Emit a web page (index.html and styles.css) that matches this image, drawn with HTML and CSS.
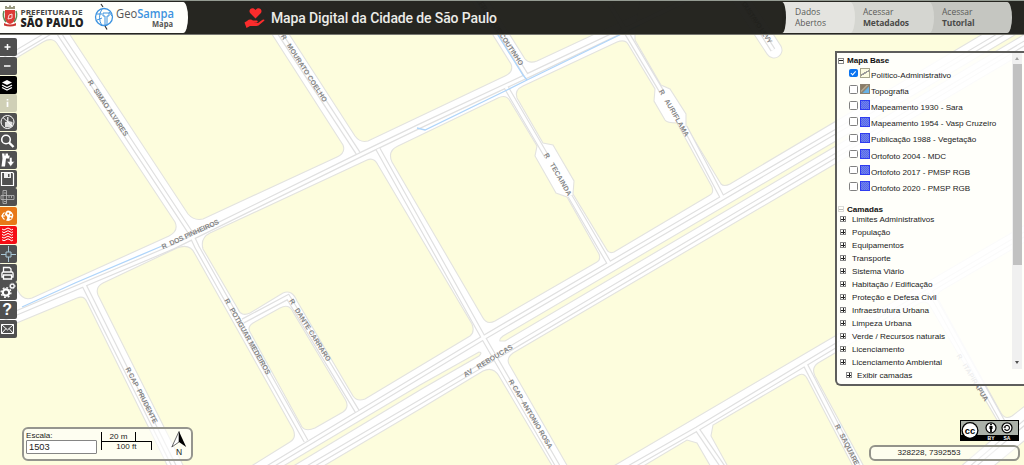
FILE: index.html
```html
<!DOCTYPE html>
<html lang="pt-BR">
<head>
<meta charset="UTF-8">
<meta name="viewport" content="width=device-width, initial-scale=1.0">
<title>GeoSampa Mapa</title>
<link rel="stylesheet" href="styles.css">
</head>
<body>
<svg class="map" width="1024" height="465" viewBox="0 0 1024 465">
    <rect width="1024" height="465" fill="#fff"/>
    <!-- quadras -->
    <g class="blocks">
        <path d="M-5 71L43 42Q53 36 58 45L175 222Q179 231 169 236L32 298Q23 301 18 291L-5 255Z"/>
        <path d="M47 0L188 214Q194 221 203 219L337 157Q346 153 343 145L250 0Z"/>
        <path d="M267 0L355 136Q360 143 368 141L505 76Q514 72 511 64L471 0Z"/>
        <path d="M488 0L525 59Q529 64 537 61L640 13V0Z"/>
        <path d="M203 249Q200 238 210 233L367 160Q374 157 378 165L472 324Q475 332 470 336L365 399Q357 402 353 396L297 301Q292 289 283 293L250 313Q241 317 238 309Z"/>
        <path d="M250 332Q247 327 253 323L280 308Q289 303 293 312L345 399Q350 407 343 412L315 428Q306 432 302 427Z"/>
        <path d="M98 295Q95 287 103 283L177 248Q190 243 195 254L293 429Q297 438 290 442L240 473H187Z"/>
        <path d="M-5 332L77 298Q84 295 87 302L171 473H-5Z"/>
        <path d="M392 162Q387 151 398 146L498 98Q506 94 510 101L537 146L535 156L556 193L567 197L599 254Q601 260 597 262L495 321Q487 325 483 318Z"/>
        <path d="M517 98Q514 90 523 86L617 42Q625 39 628 44L655 89L654 101L665 120Q667 123 677 123L712 187Q714 193 710 195L614 252Q609 254 607 250L573 194L574 181L553 145L543 143Z"/>
        <path d="M640 0L635 30V40L661 85L670 89L686 114V126L721 184Q724 187 730 184L1030 6V0Z"/>
        <path d="M500 341Q499 339 503 336L835 141.5L1030 26V31L835 146.500L505 341Z"/>
        <path d="M479 352Q483 352 479 356L420 390L290 468H280L420 385Z"/>
        <path d="M310 474L420 409L483 371Q493 366 499 376L557 474Z"/>
        <path d="M509 364Q506 358 513 353L835 164L1030 49V222L835 336L600 474H572Z"/>
        <path d="M630 474L687 440L697 443L715 474Z"/>
        <path d="M732 474L711 436L713 425L797 376Q804 371 808 380L857 474Z"/>
        <path d="M815 376Q811 368 818 363L920 303Q926 300 930 306L1000 425Q1001 432 994 438L952 474H868Z"/>
        <path d="M938 299Q936 293 944 289L1030 239V402L1012 416Q1005 420 1001 413Z"/>
        <path d="M984 474L1030 436V474Z"/>
    </g>
    <path d="M728 -20L774 50" stroke="#e3e3df" stroke-width="17" stroke-linecap="round"/>
    <path d="M728 -20L774 50" stroke="#fff" stroke-width="15" stroke-linecap="round"/>

    <!-- eixos das vias -->
    <defs>
        <g id="lanes" fill="none">
            <path d="M-5 65L59 27"/>
            <path d="M37 0L190 232L197 247L306 441"/>
            <path d="M-5 322L173 247L360 155L420 126L527 76L700 -6"/>
            <path d="M258 0L358 153"/>
            <path d="M378 149L483 337L560 470"/>
            <path d="M480 0L526 75"/>
            <path d="M506 87L547 157M570 196L609 263"/>
            <path d="M610 5L662 92M685 127L722 197"/>
            <path d="M264 470L420 376L483 338L835 132L1030 17"/>
            <path d="M304 470L420 402L835 156L1030 40"/>
            <path d="M243 321L288 297L357 411"/>
            <path d="M84 285L176 470"/>
            <path d="M625 470L697 429L835 346L1030 231"/>
            <path d="M697 429L725 470"/>
            <path d="M805 364L860 470"/>
            <path d="M930 291L1003 422"/>
            <path d="M735 -10L773 50"/>
            <path d="M964 474L1030 418"/>
        </g>
    </defs>
    <use href="#lanes" stroke="#e0e0e0" stroke-width="5.4"/>
    <use href="#lanes" stroke="#fff" stroke-width="3"/>
    <g class="water">
        <path d="M22 307L75 283L162 246"/>
        <path d="M417 128L425 130L505 91L527 80L640 25"/>
        <path d="M476 0L523 75L527 80"/>
    </g>

    <g class="streets">
        <text transform="translate(89.500 80.500) rotate(55.8)" textLength="66">R   SIMAO ALVARES</text>
        <text transform="translate(282.500 35) rotate(56.9)" textLength="79">R   MOURATO COELHO</text>
        <text transform="translate(162 247) rotate(-24.5)" textLength="62">R  DOS PINHEIROS</text>
        <text transform="translate(226.500 299) rotate(60.5)" textLength="86">R   POTIGUAR MEDEIROS</text>
        <text transform="translate(291 299.500) rotate(58)" textLength="72">R   DANTE CARRARO</text>
        <text transform="translate(127.500 367.500) rotate(62.8)" textLength="62">R CAP  PRUDENTE</text>
        <text transform="translate(480.500 2) rotate(56.6)" textLength="75">FRADIQUE COUTINHO</text>
        <text transform="translate(743.500 2) rotate(56.3)" textLength="49">GUSTAVO LEVY</text>
        <text transform="translate(546 153.500) rotate(60)" textLength="48">R   TECAINDA</text>
        <text transform="translate(661 90) rotate(60)" textLength="53">R   AURIFLAMA</text>
        <text transform="translate(464 375) rotate(-31)" textLength="56">AV   REBOUCAS</text>
        <text transform="translate(510.500 380) rotate(59.2)" textLength="79">R CAP  ANTONIO ROSA</text>
        <text transform="translate(837 424.500) rotate(63)" textLength="45">R   SAQUARE</text>
        <text transform="translate(958.500 354.500) rotate(58.5)" textLength="54">R   ITAPIRAPUA</text>
    </g>
</svg>

<header class="header">
    <div class="logos">
        <svg width="188" height="31" viewBox="0 2 188 31">
            <!-- brasao -->
            <path d="M5 9V6h2v1h2V5.500h2V7h2V6h2v3z" fill="#9a9a80"/>
            <path d="M5 10h10v9q-1 4-5 5q-4-1-5-5z" fill="#dc3b35"/>
            <path d="M4 11q-2 6 2 11M16 11q2 6-2 11" stroke="#5c8a55" stroke-width="1.500" fill="none"/>
            <path d="M8 19l1-4l3-1v4z" fill="none" stroke="#fff" stroke-width=".8"/>
            <path d="M4 23q6 3 12 0v2.500q-6 2-12 0z" fill="#c93630"/>
            <text class="pref" x="20.500" y="15" textLength="62" lengthAdjust="spacingAndGlyphs">PREFEITURA DE</text>
            <text class="sp" x="20.500" y="27" textLength="63" lengthAdjust="spacingAndGlyphs">SÃO PAULO</text>
            <!-- globo -->
            <g fill="none" stroke="#3d93e0">
                <circle cx="104" cy="17" r="8.500" stroke-width="1.300"/>
                <path d="M102 9q-5 8 0 17M96 14h6M97 20l5-2M105 25v-9h-2v-3h6v3h-2v9M109 12l3 4"/>
            </g>
            <path d="M101 4l2 3M105 26l2 3.500" stroke="#333" stroke-width="1.200"/>
            <text class="geo" x="116" y="18" textLength="58" lengthAdjust="spacingAndGlyphs">Geo<tspan>Sampa</tspan></text>
            <text class="mapa" x="152" y="26.500" textLength="21" lengthAdjust="spacingAndGlyphs">Mapa</text>
        </svg>
    </div>
    <div class="title">
        <svg width="22" height="22" viewBox="0 0 22 22" fill="#fb2c2c">
            <path d="M11.500 11.500L6.300 6.300C3.500 3 8.500-1 11.500 3C14.500-1 19.500 3 16.700 6.300z"/>
            <path d="M.5 15.500L3 14q3-2.500 6-.5h4q1.500.8 0 2l-3 .3l4 .2l4.500-3.200q2-.6 2 .8l-6 5q-1 .6-3 .4H6L2.500 21z"/>
        </svg>
        <h1>Mapa Digital da Cidade de São Paulo</h1>
    </div>
    <nav class="tabs">
        <a class="tab dados">Dados<br>Abertos</a>
        <a class="tab meta">Acessar<br><b>Metadados</b></a>
        <a class="tab tutorial">Acessar<br><b>Tutorlal</b></a>
    </nav>
</header>

<div class="toolbar">
    <button><svg viewBox="0 0 16 18"><path d="M7.500 6v6M4.500 9h6" stroke-width="1.500"/></svg></button>
    <button><svg viewBox="0 0 16 18"><path d="M4 9h6.500" stroke-width="1.500"/></svg></button>
    <button class="black"><svg viewBox="0 0 16 18"><path d="M7 4l5 2.500L7 9L2 6.500z" fill="#fff" stroke="none"/><path d="M2 9l5 2.500L12 9M2 11.500L7 14l5-2.500" stroke-width="1.200"/></svg></button>
    <button class="light"><svg viewBox="0 0 16 18"><path d="M7.500 5v1.500M7.500 7.800V13" stroke-width="1.700"/></svg></button>
    <button><svg viewBox="0 0 16 18"><circle cx="7.500" cy="9" r="6.500"/><path d="M5 14V9h2V4h1.500v4l4 1v4l-2 1.500z" fill="#ddd" stroke="none"/><path d="M3 4.500l9.500 9"/></svg></button>
    <button><svg viewBox="0 0 16 18"><circle cx="6" cy="7.500" r="4.300" stroke-width="1.600"/><path d="M9 10.500l4.500 4.500" stroke-width="2.400"/></svg></button>
    <button><svg viewBox="0 0 16 18"><path d="M2 2.500h2.500v2h1v-2H8v2h1.500v3H6l-1 8H1.500l1-8z" fill="#fff" stroke="none"/><path d="M9.500 6.500h2.500v4h2.500L10.700 15.500L7 10.500h2.500z" fill="#fff" stroke="#505050" stroke-width=".5"/></svg></button>
    <button><svg viewBox="0 0 16 18"><path d="M1.500 2.500h11l1 1v12h-12z" stroke-width="1.200"/><path d="M4 3h7v5H4z" fill="#eee" stroke="none"/><path d="M8 4h1.500v3H8z" fill="#505050" stroke="none"/></svg></button>
    <button><svg viewBox="0 0 16 18"><path d="M3 2.500h3.500v13H3zM1 7.500h13v4H1zM4 5h2M4 13.500h2M9 8v2M11.500 8v2" stroke="#bbb" stroke-width=".8"/></svg></button>
    <button class="orange"><svg viewBox="0 0 16 18"><path d="M8 3.500a5.200 5.200 0 1 1-2 10q3-3.500-1-5.500q0-4 3-4.500z" fill="#fff" stroke="none"/><g fill="#e87817" stroke="none"><circle cx="8.200" cy="6.500" r="1"/><circle cx="11" cy="8" r="1"/><circle cx="10.500" cy="11.300" r="1"/></g><path d="M4.500 5.500Q0 9 4.500 12.500M1 9h4" stroke-width="1.200"/></svg></button>
    <button class="red"><svg viewBox="0 0 16 18"><path d="M2 3q2 2 4 0t4 0t3 0M2 5.700q2 2 4 0t4 0t3 0M2 8.400q2 2 4 0t4 0t3 0M2 11.100q2 2 4 0t4 0t3 0M2 13.800q2 2 4 0t4 0t3 0"/></svg></button>
    <button><svg viewBox="0 0 16 18"><path d="M6 7h5v5H6zM8.500 1v6M8.500 12v5M1 9.500h5M11 9.500h5" stroke="#a9c8d6"/></svg></button>
    <button><svg viewBox="0 0 16 18"><path d="M3.500 8V3.500h6l1.500 1.500v3M3.500 13H2q-.5-5 1-5h9q1.500 0 1 5h-2M3.500 11h8v4h-8z" stroke-width="1.300"/></svg></button>
    <button><svg viewBox="0 0 16 18"><circle cx="6" cy="10.500" r="3.200" stroke-width="2.200"/><circle cx="6" cy="10.500" r="4.900" stroke-width="1.400" stroke-dasharray="1.900 1.900"/><circle cx="12.300" cy="4" r="1.900" stroke-width="1.300"/><circle cx="12.300" cy="4" r="2.800" stroke-width=".8" stroke-dasharray="1 1"/></svg></button>
    <button class="help">?</button>
    <button><svg viewBox="0 0 16 18"><path d="M1.500 4.500h12v9h-12zM1.500 4.500l6 5.500l6-5.500M1.500 13.500l4.500-5M13.500 13.500L9 8.500"/></svg></button>
</div>

<aside class="panel">
    <div class="scroll">
        <div class="tree">
            <div class="group"><i class="box minus"></i>Mapa Base</div>
            <ul class="base">
                <li><input type="checkbox" checked><i class="pic politico"></i><span>Político-Administrativo</span></li>
                <li><input type="checkbox"><i class="pic topo"></i><span>Topografia</span></li>
                <li><input type="checkbox"><i class="pic"></i><span>Mapeamento 1930 - Sara</span></li>
                <li><input type="checkbox"><i class="pic"></i><span>Mapeamento 1954 - Vasp Cruzeiro</span></li>
                <li><input type="checkbox"><i class="pic"></i><span>Publicação 1988 - Vegetação</span></li>
                <li><input type="checkbox"><i class="pic"></i><span>Ortofoto 2004 - MDC</span></li>
                <li><input type="checkbox"><i class="pic"></i><span>Ortofoto 2017 - PMSP RGB</span></li>
                <li><input type="checkbox"><i class="pic"></i><span>Ortofoto 2020 - PMSP RGB</span></li>
            </ul>
            <div class="group"><i class="box minus faint"></i>Camadas</div>
            <ul class="layers">
                <li><i class="box plus"></i>Limites Administrativos</li>
                <li><i class="box plus"></i>População</li>
                <li><i class="box plus"></i>Equipamentos</li>
                <li><i class="box plus"></i>Transporte</li>
                <li><i class="box plus"></i>Sistema Viário</li>
                <li><i class="box plus"></i>Habitação / Edificação</li>
                <li><i class="box plus"></i>Proteção e Defesa Civil</li>
                <li><i class="box plus"></i>Infraestrutura Urbana</li>
                <li><i class="box plus"></i>Limpeza Urbana</li>
                <li><i class="box plus"></i>Verde / Recursos naturais</li>
                <li><i class="box plus"></i>Licenciamento</li>
                <li><i class="box plus"></i>Licenciamento Ambiental</li>
            </ul>
        </div>
        <div class="scrollbar">
            <span class="arrow up"></span>
            <span class="thumb"></span>
            <span class="arrow down"></span>
        </div>
    </div>
    <div class="show"><i class="box plus"></i>Exibir camadas</div>
</aside>

<div class="scale">
    <div class="field">
        <label for="escala">Escala:</label>
        <input type="text" id="escala" value="1503">
    </div>
    <div class="bar">
        <div class="meters">20 m</div>
        <div class="feet">100 ft</div>
    </div>
    <div class="north">
        <svg width="16" height="17" viewBox="0 0 16 17"><path d="M8 .5L.8 16L8 11z" fill="#fff" stroke="#444" stroke-width=".8"/><path d="M8 .5L15.200 16L8 11z"/></svg>
        <span>N</span>
    </div>
</div>

<svg class="cc" width="59" height="21" viewBox="0 0 59 21">
    <rect width="59" height="21" fill="#000"/>
    <path d="M1 1h57v14H1z" fill="#abb1a9"/>
    <circle cx="10" cy="10.500" r="8.500"/>
    <circle cx="10" cy="10.500" r="7.200" fill="#fff"/>
    <text class="ccs" x="4.800" y="13.500" textLength="10.400" lengthAdjust="spacingAndGlyphs">cc</text>
    <circle cx="31" cy="7.800" r="5" fill="#fff" stroke="#000" stroke-width="1.200"/>
    <path d="M31 3.500a1 1 0 1 1 0 2a1 1 0 1 1 0-2M29.500 6h3v3h-.6v3h-1.800V9h-.6z"/>
    <circle cx="47" cy="7.800" r="5" fill="#fff" stroke="#000" stroke-width="1.200"/>
    <path d="M44.600 7a2.500 2.500 0 1 1 0 1.800M43.600 7.200h2.200" fill="none" stroke="#000" stroke-width="1.100"/>
    <text class="ccl" x="27.500" y="19.500" textLength="7" lengthAdjust="spacingAndGlyphs">BY</text>
    <text class="ccl" x="43.500" y="19.500" textLength="7" lengthAdjust="spacingAndGlyphs">SA</text>
</svg>
<div class="coords">328228, 7392553</div>
</body>
</html>
```
FILE: styles.css
```css
body {
    margin: 0;
    height: 465px;
    overflow: hidden;
    position: relative;
    font-family: "Liberation Sans", Arial, sans-serif;
    font-size: 8.1px;
    color: #222;
}

ul {
    list-style: none;
    margin: 0;
    padding: 0;
}

/* mapa */
.map {
    display: block;
}

.blocks path {
    fill: #fdfddd;
    stroke: #e3e3df;
    stroke-width: 1.1;
}

.water path {
    fill: none;
    stroke: #afd5fa;
    stroke-width: 1.3;
}

.streets text {
    font-size: 7px;
    font-weight: bold;
    fill: #858585;
    white-space: pre;
    dominant-baseline: central;
}

/* topo */
.header {
    position: absolute;
    top: 0;
    left: 0;
    width: 1024px;
    height: 35px;
    box-sizing: border-box;
    border-top: 1px solid #949b92;
    border-bottom: 1px solid #777770;
    background: rgba(29, 29, 25, 0.96);
    display: flex;
    padding-top: 1px;
}

.logos {
    width: 188px;
    height: 31px;
    background: #fffffb;
    border-radius: 0 5px 5px 0 / 0 16px 16px 0;
}

.logos svg {
    display: block;
}

.pref {
    font: bold 7.8px "Open Sans", sans-serif;
    fill: #444;
}

.sp {
    font: 800 12px "Open Sans", sans-serif;
    fill: #222;
}

.geo {
    font: 500 12px "Open Sans", sans-serif;
    fill: #555;
}

.geo tspan {
    fill: #3d93e0;
    font-weight: 600;
}

.mapa {
    font: bold 8px "Open Sans", sans-serif;
    fill: #555;
}

.title {
    flex: 1;
    display: flex;
    align-items: center;
    padding-left: 56px;
    gap: 5px;
}

.title h1 {
    margin: 0;
    font: 500 14px Roboto, sans-serif;
    color: #ecece8;
    white-space: nowrap;
    letter-spacing: -0.12px;
}

.tabs {
    display: flex;
    width: 230px;
    height: 31px;
    margin-right: 12px;
    position: relative;
}

.tabs::before {
    content: "";
    position: absolute;
    left: 0;
    width: 4px;
    height: 31px;
    z-index: 4;
    background: #24241f;
    border-radius: 0 4px 4px 0 / 0 16px 16px 0;
}

.tab {
    box-sizing: border-box;
    height: 31px;
    padding-top: 4px;
    font: 500 8.5px/11px "Open Sans", sans-serif;
    color: #5a5a58;
    border-radius: 0 5px 5px 0 / 0 16px 16px 0;
    position: relative;
    white-space: nowrap;
}

.tab b {
    color: #4a4a48;
    letter-spacing: -0.15px;
}

.dados {
    width: 73px;
    padding-left: 13px;
    background: #e4e4e0;
    z-index: 3;
}

.meta {
    width: 84px;
    margin-left: -5px;
    padding-left: 13px;
    background: #d5d6d1;
    z-index: 2;
}

.tutorial {
    width: 83px;
    margin-left: -5px;
    padding-left: 13px;
    background: #c5c6c1;
    z-index: 1;
}

/* ferramentas */
.toolbar {
    position: absolute;
    top: 38px;
    left: 0;
    display: flex;
    flex-direction: column;
    gap: 0.8px;
}

.toolbar button {
    width: 16.5px;
    height: 18px;
    padding: 0;
    border: none;
    border-radius: 0 2px 2px 0;
    background: #505050;
    color: #fff;
}

.toolbar svg {
    display: block;
    width: 16px;
    height: 18px;
    fill: none;
    stroke: #fff;
    stroke-width: 1;
}

.toolbar .black {
    background: #000;
}

.toolbar .light {
    background: #d0d0b6;
}

.toolbar .orange {
    background: #e87817;
}

.toolbar .red {
    background: #f50d14;
}

.toolbar .help {
    font: bold 16px/18px "Liberation Sans", sans-serif;
    padding-right: 2px;
}

/* camadas */
.panel {
    position: absolute;
    top: 51px;
    left: 835px;
    width: 189px;
    height: 335px;
    box-sizing: border-box;
    border: 2px solid #5e5e5c;
    border-right: none;
    border-radius: 0 0 0 6px;
    background: rgba(255, 255, 255, 0.86);
}

.scroll {
    display: flex;
    height: 316px;
}

.tree {
    flex: 1;
    white-space: nowrap;
}

.group {
    display: flex;
    align-items: center;
    gap: 3px;
    height: 11px;
    padding: 2px 0 0 1px;
    font-weight: bold;
    color: #111;
}

.box {
    position: relative;
    box-sizing: border-box;
    width: 6px;
    height: 6px;
    flex: none;
    border: 1px solid #8a8a8a;
    background: linear-gradient(#222, #222) center / 4px 1px no-repeat;
}

.plus::after {
    content: "";
    position: absolute;
    left: 1.5px;
    top: 0;
    width: 1px;
    height: 4px;
    background: #222;
}

.faint {
    opacity: 0.3;
}

.base {
    margin-bottom: 6px;
}

.base li {
    display: flex;
    align-items: center;
    height: 16.2px;
    padding-left: 12px;
}

.base input {
    appearance: none;
    position: relative;
    box-sizing: border-box;
    width: 8.5px;
    height: 8.5px;
    margin: 0 2px 2px 0;
    border: 1px solid #808080;
    border-radius: 1.5px;
    background: #fff;
}

.base input:checked {
    background: #0b74f0;
    border-color: #0b74f0;
}

.base input:checked::after {
    content: "";
    position: absolute;
    left: 2px;
    top: 0;
    width: 1.5px;
    height: 3.5px;
    border: solid #fff;
    border-width: 0 1.2px 1.2px 0;
    transform: rotate(42deg);
}

.pic {
    box-sizing: border-box;
    width: 10px;
    height: 10px;
    margin: 0 1.5px 2px 0;
    border: 1px solid #2f3cf0;
    background: repeating-conic-gradient(#5468ec 0 25%, #7484ea 0 50%) 0 0 / 2px 2px;
}

.politico {
    border-color: #a5a58c;
    background: linear-gradient(150deg, #fbfbe0 42%, #999 43% 56%, #fbfbe0 57%);
}

.topo {
    border-color: #8c8270;
    background: linear-gradient(135deg, #8a7c66 30%, #c0b59c 40%, #8a7c66 52%, #68b4e8 65%);
}

.base span {
    padding-top: 2px;
}

.layers {
    margin-top: -2px;
}

.layers li {
    display: flex;
    align-items: center;
    gap: 6px;
    height: 13.03px;
    padding-left: 3px;
}

.scrollbar {
    width: 10px;
    margin-right: 2px;
    background: #f0f0f0;
    display: flex;
    flex-direction: column;
    align-items: center;
}

.arrow {
    margin-top: 4px;
    border: 2.5px solid transparent;
}

.up {
    border-top: none;
    border-bottom: 3px solid #a0a0a0;
    margin-bottom: 4px;
}

.down {
    border-bottom: none;
    border-top: 3px solid #505050;
    margin: auto 0 5px;
}

.thumb {
    width: 9px;
    height: 201px;
    background: #c1c1c1;
}

.show {
    display: flex;
    align-items: center;
    gap: 5px;
    height: 12px;
    padding-left: 9px;
}

/* escala */
.scale {
    position: absolute;
    left: 22px;
    top: 427px;
    width: 171px;
    height: 34px;
    box-sizing: border-box;
    border: 2px solid #95958e;
    border-radius: 6px;
    background: rgba(255, 255, 255, 0.6);
    display: flex;
    padding: 2px 0 0 2px;
}

.field label {
    display: block;
    height: 9px;
    line-height: 10px;
}

.field input {
    display: block;
    box-sizing: border-box;
    width: 71px;
    height: 14px;
    padding: 0 2px;
    border: 1px solid #858585;
    border-radius: 1px;
    font: 9.3px "Liberation Sans", sans-serif;
    color: #222;
}

.bar {
    width: 50px;
    height: 18px;
    margin: 1px 0 0 4px;
    border-left: 1px solid #000;
    text-align: center;
}

.meters {
    box-sizing: border-box;
    width: 34px;
    height: 9px;
    line-height: 10px;
    border-right: 1px solid #000;
}

.feet {
    box-sizing: border-box;
    height: 9px;
    line-height: 9px;
    border-top: 1px solid #000;
    border-right: 1px solid #000;
}

.north {
    display: flex;
    flex-direction: column;
    align-items: center;
    margin: 0 0 0 19px;
}

.north span {
    font-size: 8.5px;
    line-height: 8px;
}

.cc {
    position: absolute;
    left: 960px;
    top: 420px;
}

.ccs {
    font: bold 9px "Liberation Sans", sans-serif;
}

.ccl {
    font: bold 4.5px "Liberation Sans", sans-serif;
    fill: #fff;
}

.coords {
    position: absolute;
    left: 869px;
    top: 445px;
    width: 151px;
    height: 16px;
    box-sizing: border-box;
    border: 2px solid #93938a;
    border-radius: 6px;
    background: rgba(255, 255, 255, 0.5);
    text-align: center;
    line-height: 11px;
    padding-right: 31px;
}
```
